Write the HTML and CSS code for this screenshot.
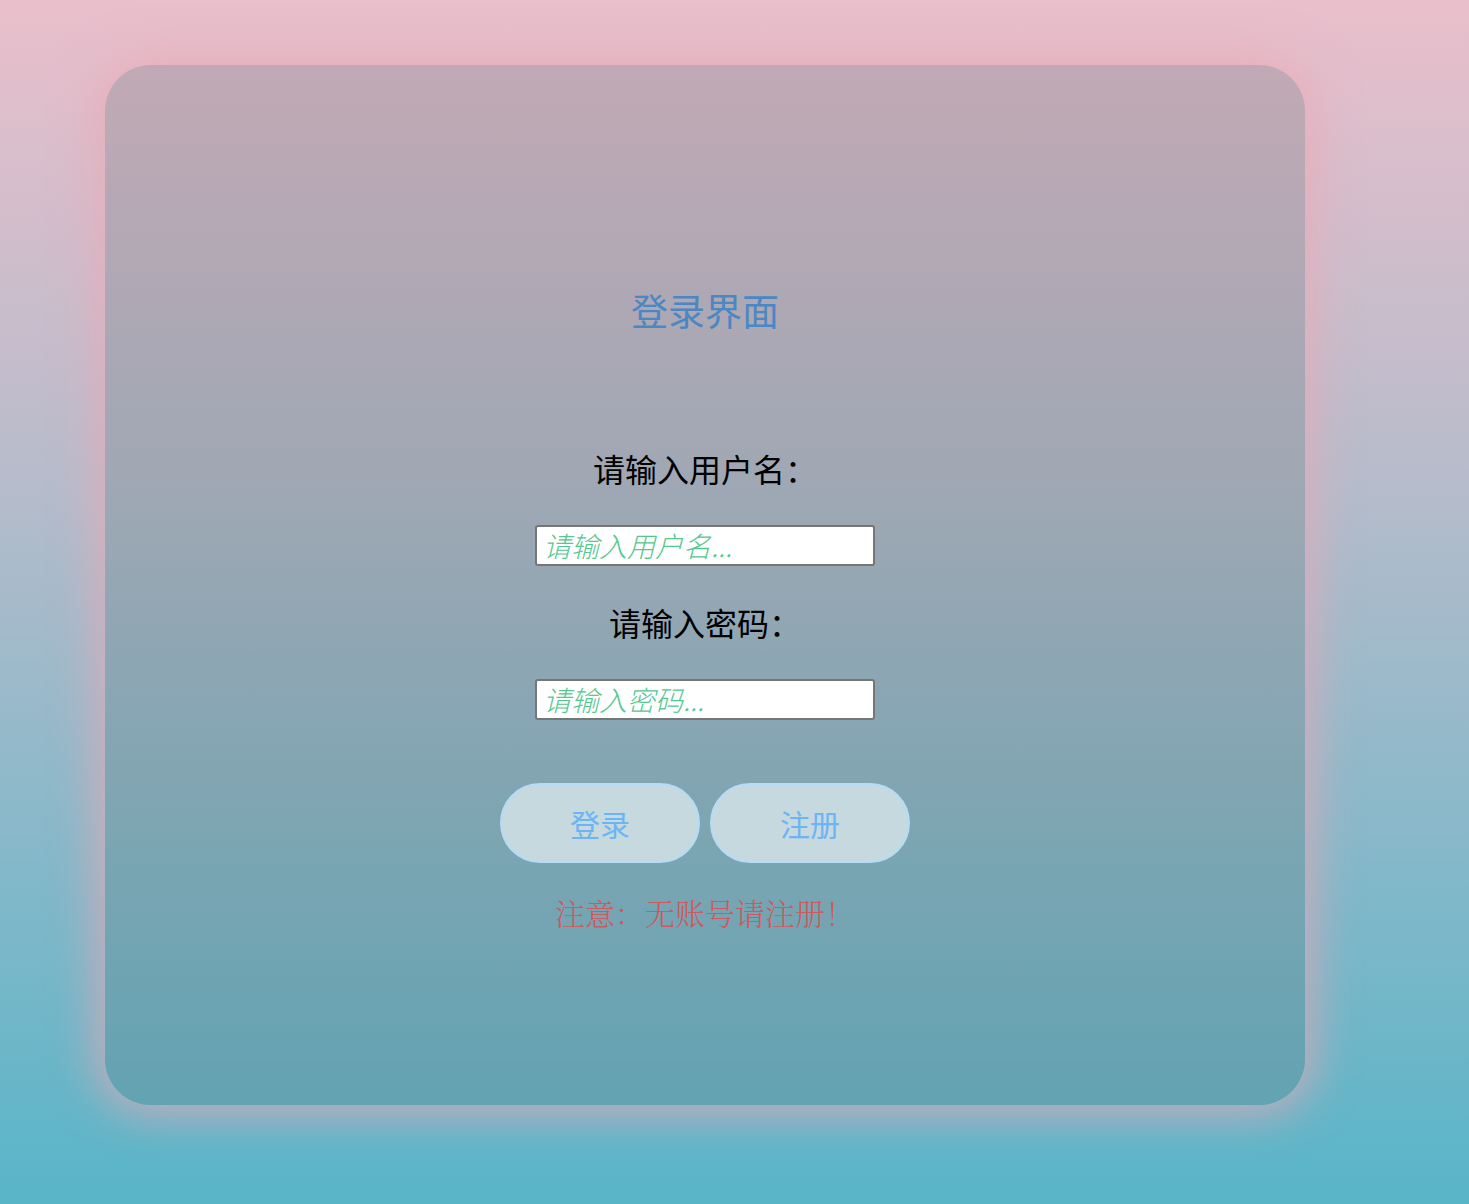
FILE: index.html
```html
<!DOCTYPE html>
<html lang="zh">
<head>
<meta charset="utf-8">
<title>登录界面</title>
<link rel="stylesheet" href="styles.css">
</head>
<body>
<div class="card">
  <h1 class="title">登录界面</h1>
  <label class="label" for="user">请输入用户名：</label>
  <input class="field" id="user" type="text" placeholder="请输入用户名...">
  <label class="label" for="pwd">请输入密码：</label>
  <input class="field" id="pwd" type="password" placeholder="请输入密码...">
  <div class="buttons">
    <button class="btn">登录</button>
    <button class="btn">注册</button>
  </div>
  <p class="notice">注意：无账号请注册！</p>
</div>
</body>
</html>
```
FILE: styles.css
```css
html, body {
  margin: 0;
  padding: 0;
}
body {
  height: 1204px;
  overflow: hidden;
  background: linear-gradient(to bottom, #eabfcb 0%, #b9bccb 38%, #58b5c8 100%);
  font-family: "Noto Sans CJK SC", "Noto Sans", sans-serif;
  display: flex;
  flex-direction: column;
}
.card {
  box-sizing: border-box;
  width: 1200px;
  height: 1040px;
  margin: 65px 0 0 105px;
  border-radius: 46px;
  background: rgba(90, 106, 112, 0.25);
  box-shadow: 0 0 45px 8px rgba(236, 168, 182, 0.75);
  display: flex;
  flex-direction: column;
  align-items: center;
  padding-top: 223px;
}
.title {
  margin: 0;
  font-size: 37px;
  line-height: 44px;
  font-weight: normal;
  color: #4a87c3;
}
.label {
  display: block;
  font-size: 32px;
  line-height: 40px;
  color: #000;
  margin-top: 116px;
}
.label + .field + .label {
  margin-top: 36px;
}
.field {
  box-sizing: border-box;
  width: 340px;
  height: 41px;
  margin-top: 37px;
  border: 2px solid #767676;
  border-radius: 3px;
  background: #fff;
  padding: 0 6px 2px;
  font-family: "Noto Sans CJK SC", sans-serif;
  font-size: 28px;
  font-weight: 300;
  font-style: italic;
  outline: none;
}
.field::placeholder {
  color: #55c88f;
  font-style: italic;
  font-weight: 300;
}
.buttons {
  display: flex;
  gap: 10px;
  margin-top: 63px;
}
.btn {
  box-sizing: border-box;
  width: 200px;
  height: 80px;
  border-radius: 40px;
  border: 2px solid #b4dcf6;
  background: #c6d9df;
  color: #6db4f4;
  font-family: "Noto Sans CJK SC", sans-serif;
  font-size: 30px;
  padding: 0;
  cursor: pointer;
}
.notice {
  margin: 29px 0 0;
  font-size: 30px;
  line-height: 40px;
  color: #cc5a5e;
  font-weight: 300;
  font-family: "Noto Serif CJK SC", "Noto Sans CJK SC", serif;
}
```
